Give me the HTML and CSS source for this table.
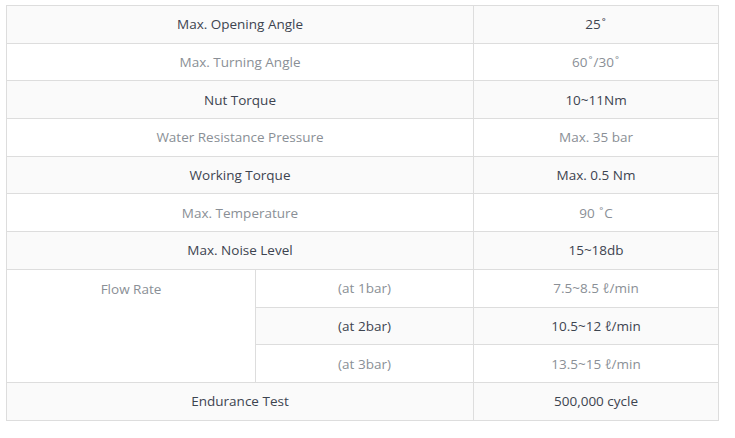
FILE: index.html
```html
<!DOCTYPE html>
<html lang="en">
<head>
<meta charset="utf-8">
<link rel="stylesheet" href="styles.css">
</head>
<body>
<div class="wrap">
<table class="spec">
<colgroup><col class="c1"><col class="c2"><col class="c3"></colgroup>
<tbody>
<tr class="dark"><td colspan="2">Max. Opening Angle</td><td>25<span class="deg">˚</span></td></tr>
<tr class="light"><td colspan="2">Max. Turning Angle</td><td>60<span class="deg">˚</span>/30<span class="deg">˚</span></td></tr>
<tr class="dark"><td colspan="2">Nut Torque</td><td>10~11Nm</td></tr>
<tr class="light"><td colspan="2">Water Resistance Pressure</td><td>Max. 35 bar</td></tr>
<tr class="dark"><td colspan="2">Working Torque</td><td>Max. 0.5 Nm</td></tr>
<tr class="light"><td colspan="2">Max. Temperature</td><td>90 <span class="deg">˚</span>C</td></tr>
<tr class="dark"><td colspan="2">Max. Noise Level</td><td>15~18db</td></tr>
<tr class="light"><td rowspan="3" class="top">Flow Rate</td><td>(at 1bar)</td><td>7.5~8.5 ℓ/min</td></tr>
<tr class="dark"><td>(at 2bar)</td><td>10.5~12 ℓ/min</td></tr>
<tr class="light"><td>(at 3bar)</td><td>13.5~15 ℓ/min</td></tr>
<tr class="dark"><td colspan="2">Endurance Test</td><td>500,000 cycle</td></tr>
</tbody>
</table>
</div>
</body>
</html>
```
FILE: styles.css
```css
html, body {
  margin: 0;
  padding: 0;
  background: #ffffff;
}
.wrap {
  padding: 5px 6px;
}
.spec {
  border-collapse: collapse;
  table-layout: fixed;
  width: 712px;
  font-family: "Open Sans", "Noto Sans", sans-serif;
  font-size: 13.5px;
}
.c1 { width: 249px; }
.c2 { width: 218px; }
.c3 { width: 245px; }
.spec td {
  border: 1px solid #dddddd;
  height: 36.7px;
  padding: 0;
  text-align: center;
  vertical-align: middle;
  line-height: 18px;
}
.spec tr.dark td {
  background: #fafafa;
  color: #3d4450;
}
.spec tr.light td {
  background: #ffffff;
  color: #8a8f96;
}
.spec td.top {
  vertical-align: top;
  padding-top: 10px;
  background: #ffffff;
}
.deg {
  padding: 0 1px;
}
```
